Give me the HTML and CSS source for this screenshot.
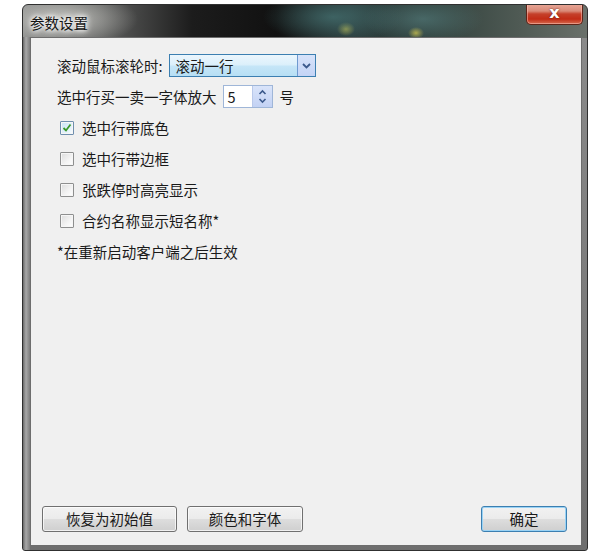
FILE: index.html
```html
<!DOCTYPE html>
<html lang="zh">
<head>
<meta charset="utf-8">
<title>参数设置</title>
<link rel="stylesheet" href="styles.css">
</head>
<body>
<div class="window">
  <div class="titlebar">
    <span class="title">参数设置</span>
    <div class="close"><span>x</span></div>
  </div>
  <div class="frame">
    <div class="panel">
      <div class="rows">
        <div class="row">
          <span class="label">滚动鼠标滚轮时:</span>
          <div class="combo">
            <span class="combo-text">滚动一行</span>
            <span class="combo-btn">
              <svg width="9" height="6" viewBox="0 0 9 6"><path d="M1 1 L4.5 4.5 L8 1" fill="none" stroke="#3c5a8c" stroke-width="1.8"/></svg>
            </span>
          </div>
        </div>
        <div class="row">
          <span class="label">选中行买一卖一字体放大</span>
          <div class="spin">
            <span class="spin-text">5</span>
            <span class="spin-btn">
              <svg width="9" height="15" viewBox="0 0 9 15"><path d="M1.5 5 L4.5 2 L7.5 5" fill="none" stroke="#3c5a8c" stroke-width="1.6"/><path d="M1.5 10 L4.5 13 L7.5 10" fill="none" stroke="#3c5a8c" stroke-width="1.6"/></svg>
            </span>
          </div>
          <span class="unit">号</span>
        </div>
        <div class="row check-row">
          <span class="box checked"><svg width="10" height="10" viewBox="0 0 10 10"><path d="M1.5 5 L4 7.5 L8.5 1.5" fill="none" stroke="#3a9a2a" stroke-width="1.8"/></svg></span>
          <span>选中行带底色</span>
        </div>
        <div class="row check-row">
          <span class="box"></span>
          <span>选中行带边框</span>
        </div>
        <div class="row check-row">
          <span class="box"></span>
          <span>张跌停时高亮显示</span>
        </div>
        <div class="row check-row">
          <span class="box"></span>
          <span>合约名称显示短名称*</span>
        </div>
        <div class="row">
          <span>*在重新启动客户端之后生效</span>
        </div>
      </div>
      <div class="buttons">
        <div class="btn btn-reset">恢复为初始值</div>
        <div class="btn btn-font">颜色和字体</div>
        <div class="btn btn-ok">确定</div>
      </div>
    </div>
  </div>
</div>
</body>
</html>
```
FILE: styles.css
```css
html, body {
  margin: 0;
  padding: 0;
  background: #ffffff;
}
body {
  font-family: "Noto Sans CJK SC", "Noto Sans", sans-serif;
  font-size: 14.5px;
  color: #1a1a1a;
}
.window {
  margin: 4px 0 0 22px;
  width: 566px;
  height: 547px;
  box-sizing: border-box;
  border: 1px solid #303030;
  border-radius: 6px 6px 3px 3px;
  display: flex;
  flex-direction: column;
  overflow: hidden;
  background:
    radial-gradient(ellipse 75px 28px at 40px 14px, rgba(205,205,200,0.85), rgba(205,205,200,0) 100%),
    radial-gradient(ellipse 70px 26px at 310px 12px, rgba(70,115,115,0.75), rgba(70,115,115,0) 100%),
    radial-gradient(ellipse 9px 7px at 323px 24px, rgba(190,180,70,0.85), rgba(190,180,70,0) 100%),
    radial-gradient(ellipse 8px 6px at 393px 28px, rgba(200,190,80,0.8), rgba(200,190,80,0) 100%),
    radial-gradient(ellipse 60px 24px at 400px 14px, rgba(85,125,125,0.65), rgba(85,125,125,0) 100%),
    linear-gradient(180deg, rgba(0,0,0,0) 0, rgba(0,0,0,0) 33px, #8a8a8a 33px, #6e6e6e 100%),
    linear-gradient(90deg, #8a8b8a 0, #5e5f5e 14%, #1c1c1c 30%, #111 45%, #2a3a3a 58%, #30403c 72%, #4f5a54 88%, #6a706a 100%);
}
.titlebar {
  height: 32px;
  flex: none;
  display: flex;
  justify-content: space-between;
  align-items: flex-start;
}
.title {
  margin: 10px 0 0 7px;
  font-size: 14.5px;
  line-height: 16px;
  color: #151515;
  text-shadow: 0 0 4px #fff, 0 0 6px #fff, 0 0 8px rgba(255,255,255,0.8);
}
.close {
  margin: -1px 4px 0 0;
  width: 57px;
  height: 21px;
  box-sizing: border-box;
  border: 1px solid #5e2418;
  border-top: none;
  border-radius: 0 0 5px 5px;
  background: linear-gradient(180deg, #e9a898 0, #d98a78 35%, #c5402a 50%, #c22c16 75%, #d56a4e 100%);
  box-shadow: inset 0 0 0 1px rgba(255,200,190,0.5);
  display: flex;
  align-items: center;
  justify-content: center;
}
.close span {
  color: #fff;
  font-family: "DejaVu Sans", sans-serif;
  font-weight: bold;
  font-size: 16px;
  line-height: 16px;
  margin-top: -2px;
  text-shadow: 0 0 2px #5a1a10;
}
.frame {
  flex: 1;
  display: flex;
  padding: 0 5px 4px 7px;
  background: linear-gradient(90deg, #6a6a6a 0, #a8a8a8 3px, #7c7c7c 7px, transparent 7px);
}
.panel {
  flex: 1;
  box-sizing: border-box;
  border: 1px solid #6d6d6d;
  background: #f0f0f0;
  display: flex;
  flex-direction: column;
}
.rows {
  flex: 1;
  padding: 12px 0 0 26px;
  display: flex;
  flex-direction: column;
}
.row {
  height: 31px;
  display: flex;
  align-items: center;
  line-height: 16px;
  white-space: nowrap;
}
.label {
  margin-right: 6px;
}
.combo {
  width: 147px;
  height: 23px;
  box-sizing: border-box;
  border: 1px solid #3c7fb1;
  background: linear-gradient(180deg, #ecf6fd 0, #dcf0fb 45%, #c4e5f7 55%, #b7dff4 100%);
  display: flex;
  align-items: stretch;
}
.combo-text {
  flex: 1;
  padding-left: 4px;
  display: flex;
  align-items: center;
  margin: 2px 0 2px 2px;
}
.combo-btn {
  width: 17px;
  border-left: 1px solid #6f9ad0;
  background: linear-gradient(180deg, #d7e3fa 0, #c4d4f6 100%);
  display: flex;
  align-items: center;
  justify-content: center;
}
.spin {
  margin-left: 0;
  width: 50px;
  height: 23px;
  box-sizing: border-box;
  border: 1px solid #9fb6d8;
  background: #fff;
  display: flex;
  align-items: stretch;
}
.spin-text {
  flex: 1;
  padding-left: 4px;
  display: flex;
  align-items: center;
}
.spin-btn {
  width: 19px;
  background: linear-gradient(180deg, #d9e4fa 0, #c3d2f4 100%);
  border-left: 1px solid #b9c9ea;
  display: flex;
  align-items: center;
  justify-content: center;
}
.unit {
  margin-left: 7px;
}
.check-row {
  padding-left: 3px;
}
.box {
  width: 14px;
  height: 14px;
  box-sizing: border-box;
  border: 1px solid #8e8f8f;
  border-radius: 1px;
  background: linear-gradient(135deg, #dcdcdc 0, #f4f4f4 60%, #ffffff 100%);
  box-shadow: inset 0 0 0 1px #f6f6f6;
  margin-right: 8px;
  display: flex;
  align-items: center;
  justify-content: center;
}
.box.checked {
  border-color: #6f8fae;
  background: linear-gradient(135deg, #c9e4f5 0, #e6f3fb 70%, #ffffff 100%);
}
.buttons {
  display: flex;
  padding: 0 14px 13px 11px;
}
.btn {
  height: 26px;
  box-sizing: border-box;
  border: 1px solid #707070;
  border-radius: 3px;
  background: linear-gradient(180deg, #f2f2f2 0, #ebebeb 48%, #dddddd 52%, #cfcfcf 100%);
  box-shadow: inset 0 0 0 1px rgba(255,255,255,0.7);
  display: flex;
  align-items: center;
  justify-content: center;
  line-height: 16px;
}
.btn-reset {
  width: 135px;
}
.btn-font {
  width: 116px;
  margin-left: 10px;
}
.btn-ok {
  width: 86px;
  margin-left: auto;
  border-color: #3c7fb1;
  box-shadow: inset 0 0 0 1px #9ad3f5;
}
```
